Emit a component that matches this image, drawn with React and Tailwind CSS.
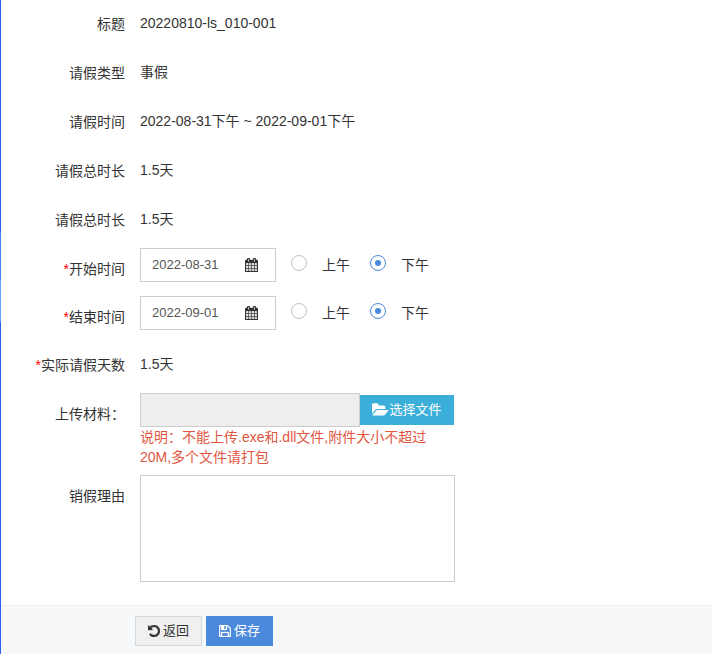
import React, { useRef, useState } from 'react';
import clsx from 'clsx';

const icons = {
  calendar: {
    viewBox: '64 0 1664 1792',
    path: 'M192 1664h288v-288h-288v288zm352 0h320v-288h-320v288zm-352-352h288v-320h-288v320zm352 0h320v-320h-320v320zm-352-384h288v-288h-288v288zm736 736h320v-288h-320v288zm-384-736h320v-288h-320v288zm768 736h288v-288h-288v288zm-384-352h320v-320h-320v320zm-352-864v-288q0-13-9.5-22.5t-22.5-9.5h-64q-13 0-22.5 9.5t-9.5 22.5v288q0 13 9.5 22.5t22.5 9.5h64q13 0 22.5-9.5t9.5-22.5zm736 864h288v-320h-288v320zm-384-384h320v-288h-320v288zm384 0h288v-288h-288v288zm32-480v-288q0-13-9.5-22.5t-22.5-9.5h-64q-13 0-22.5 9.5t-9.5 22.5v288q0 13 9.5 22.5t22.5 9.5h64q13 0 22.5-9.5t9.5-22.5zm384-64v1280q0 52-38 90t-90 38h-1408q-52 0-90-38t-38-90v-1280q0-52 38-90t90-38h128v-96q0-66 47-113t113-47h64q66 0 113 47t47 113v96h384v-96q0-66 47-113t113-47h64q66 0 113 47t47 113v96h128q52 0 90 38t38 90z',
  },
  folder: {
    viewBox: '-32 96 1879 1600',
    path: 'M1815 952q0 31-31 66l-336 396q-43 51-120.5 86.5t-143.5 35.5h-1088q-34 0-60.5-13t-26.5-43q0-31 31-66l336-396q43-51 120.5-86.5t143.5-35.5h1088q34 0 60.5 13t26.5 43zm-343-344v160h-832q-94 0-197 47.5t-164 119.5l-337 396-5 6q0-4-.5-12.5t-.5-12.5v-960q0-92 66-158t158-66h320q92 0 158 66t66 158v32h544q92 0 158 66t66 158z',
  },
  undo: {
    viewBox: '128 128 1536 1536',
    path: 'M1664 896q0 156-61 298t-164 245-245 164-298 61q-172 0-327-72.5t-264-204.5q-7-10-6.5-22.5t8.5-20.5l137-138q10-9 25-9 16 2 23 12 73 95 179 147t225 52q104 0 198.5-40.5t163.5-109.5 109.5-163.5 40.5-198.5-40.5-198.5-109.5-163.5-163.5-109.5-198.5-40.5q-98 0-188 35.5t-160 101.5l137 138q31 30 14 69-17 40-59 40h-448q-26 0-45-19t-19-45v-448q0-42 40-59 39-17 69 14l130 129q107-101 244.5-156.5t284.5-55.5q156 0 298 61t245 164 164 245 61 298z',
  },
  save: {
    viewBox: '128 128 1536 1536',
    path: 'M512 1536h768v-384h-768v384zm896 0h128v-896q0-14-10-38.5t-20-34.5l-281-281q-10-10-34-20t-39-10v416q0 40-28 68t-68 28h-576q-40 0-68-28t-28-68v-416h-128v1280h128v-416q0-40 28-68t68-28h832q40 0 68 28t28 68v416zm-384-928v-320q0-13-9.5-22.5t-22.5-9.5h-192q-13 0-22.5 9.5t-9.5 22.5v320q0 13 9.5 22.5t22.5 9.5h192q13 0 22.5-9.5t9.5-22.5zm640 32v928q0 40-28 68t-68 28h-1344q-40 0-68-28t-28-68v-1344q0-40 28-68t68-28h928q40 0 88 20t76 48l280 280q28 28 48 76t20 88z',
  },
};

const Icon = ({ name, className }) => (
  <svg viewBox={icons[name].viewBox} className={clsx('shrink-0', className)} fill="currentColor" aria-hidden="true">
    <path d={icons[name].path} stroke="currentColor" strokeWidth={name === 'folder' ? 0 : 40} />
  </svg>
);

const labelClass = 'w-[139px] shrink-0 pr-[15px] pt-[11px] text-right';

const Row = ({ label, htmlFor, required, className, children }) => {
  const Label = htmlFor ? 'label' : 'div';
  return (
    <div className={clsx('flex', className)}>
      <Label htmlFor={htmlFor} className={labelClass}>
        {required && <span className="text-[#ff0000]">*</span>}
        {label}
      </Label>
      {children}
    </div>
  );
};

const StaticRow = ({ label, value, required }) => (
  <Row label={label} required={required} className="mb-[14px] min-h-[35px]">
    <p className="flex-1 pt-[10px]">{value}</p>
  </Row>
);

const DateRow = ({ id, label, defaultDate }) => {
  const [date, setDate] = useState(defaultDate);
  const [half, setHalf] = useState('pm');

  const halves = [
    { value: 'am', text: '上午' },
    { value: 'pm', text: '下午' },
  ];

  return (
    <Row label={label} htmlFor={id} required className="mb-[14px]">
      <div className="mr-[15px] flex h-[34px] w-[136px] items-center border border-[#cccccc] px-[11px]">
        <input
          id={id}
          type="text"
          className="w-[93px] text-[13px] text-[#555555] outline-none"
          value={date}
          onChange={(e) => setDate(e.target.value)}
        />
        <Icon name="calendar" className="h-[14px] w-[13px]" />
      </div>
      <div className="flex items-start gap-5">
        {halves.map((item) => (
          <label key={item.value} className="flex items-start gap-[15px] pt-[7px]">
            <input
              type="radio"
              name={`${id}-half`}
              className="flex size-4 appearance-none items-center justify-center rounded-full border border-[#c0c0c0] bg-white before:size-[6px] before:rounded-full checked:border-[#4a89dc] checked:before:bg-[#4a89dc]"
              checked={half === item.value}
              onChange={() => setHalf(item.value)}
            />
            <span>{item.text}</span>
          </label>
        ))}
      </div>
    </Row>
  );
};

const App = () => {
  const [fileName, setFileName] = useState('');
  const [reason, setReason] = useState('');
  const fileRef = useRef(null);

  const handleFile = (e) => {
    const file = e.target.files[0];
    setFileName(file ? file.name : '');
  };

  return (
    <div className="flex min-h-screen bg-white font-['Liberation_Sans','Noto_Sans_CJK_SC',sans-serif] text-sm/5 text-[#333333]">
      {/* edge of the side menu */}
      <div className="flex w-px shrink-0 flex-col">
        <div className="h-[232px] bg-[#2f62ec]" />
        <div className="h-12 bg-[#3f86f8]" />
        <div className="h-[42px] bg-[#64a0fb]" />
        <div className="flex-1 bg-[#2f62ec]" />
      </div>

      <form className="flex min-w-0 flex-1 flex-col" onSubmit={(e) => e.preventDefault()}>
        <div className="flex-1 pt-[3px] pb-[23px]">
          <StaticRow label="标题" value="20220810-ls_010-001" />
          <StaticRow label="请假类型" value="事假" />
          <StaticRow label="请假时间" value="2022-08-31下午 ~ 2022-09-01下午" />
          <StaticRow label="请假总时长" value="1.5天" />
          <StaticRow label="请假总时长" value="1.5天" />
          <DateRow id="start" label="开始时间" defaultDate="2022-08-31" />
          <DateRow id="end" label="结束时间" defaultDate="2022-09-01" />
          <StaticRow label="实际请假天数" value="1.5天" required />

          <Row label="上传材料：" htmlFor="material" className="mb-2">
            <div className="max-w-[314px] flex-1">
              <div className="flex items-center">
                <input
                  id="material"
                  type="text"
                  className="h-[34px] min-w-0 flex-1 border border-[#cccccc] bg-[#eeeeee] px-3 text-[13px] outline-none"
                  value={fileName}
                  readOnly
                />
                <button
                  type="button"
                  className="flex h-[30px] w-[94px] items-center justify-center bg-[#3bafda] text-[13px] text-white"
                  onClick={() => fileRef.current.click()}
                >
                  <Icon name="folder" className="h-[14px] w-[17px]" />
                  选择文件
                </button>
                <input ref={fileRef} type="file" className="hidden" aria-label="选择文件" onChange={handleFile} />
              </div>
              <p className="text-[#df5640]">说明：不能上传.exe和.dll文件,附件大小不超过20M,多个文件请打包</p>
            </div>
          </Row>

          <Row label="销假理由" htmlFor="reason">
            <textarea
              id="reason"
              className="h-[107px] max-w-[315px] flex-1 resize-none border border-[#cccccc] px-3 py-2 text-[13px] outline-none"
              value={reason}
              onChange={(e) => setReason(e.target.value)}
            />
          </Row>
        </div>

        <div className="flex gap-1 border-t border-[#eef1f5] bg-[#f6f8fa] pt-[10px] pb-2 pl-[134px] text-[13px]">
          <button type="button" className="flex h-[30px] w-[67px] items-center justify-center gap-[3px] border border-[#d3d8dd] bg-[#f0f0f0]">
            <Icon name="undo" className="size-3" />
            返回
          </button>
          <button type="submit" className="flex h-[30px] w-[67px] items-center justify-center gap-[3px] bg-[#4a89dc] text-white">
            <Icon name="save" className="size-3" />
            保存
          </button>
        </div>
      </form>
    </div>
  );
};

export default App;
